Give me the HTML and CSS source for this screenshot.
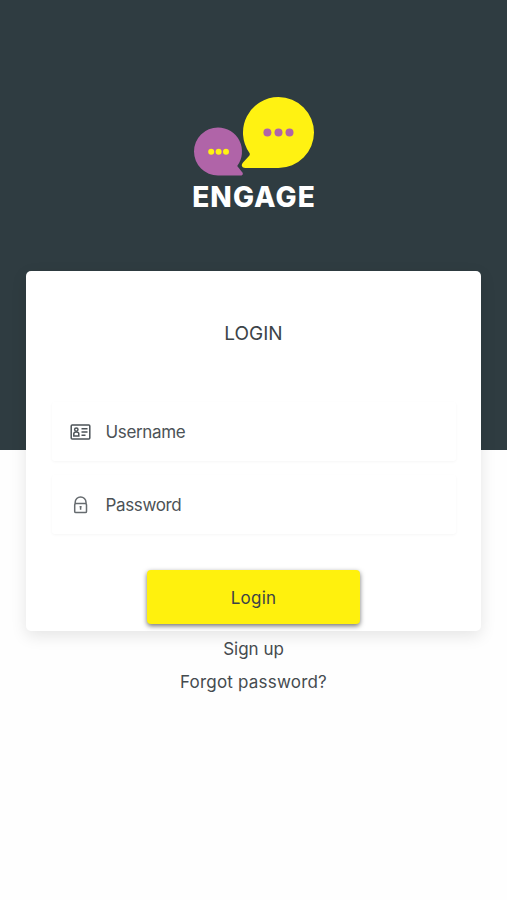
FILE: index.html
```
<!DOCTYPE html>
<html lang="en">
<head>
    <meta charset="UTF-8">
    <meta name="viewport" content="width=device-width, initial-scale=1.0">
    <title>Engage - Login</title>
    <link rel="stylesheet" href="styles.css">
</head>
<body>
    <header class="hero">
        <svg class="logo" width="124" height="82" viewBox="192 96 124 82">
            <path fill="#b064a8" d="M218 127.500A24 24 0 1 0 218 175.500H240.500C243 175.500 243.500 173.500 242 172L237.200 165.900A24 24 0 0 0 218 127.500Z"/>
            <path fill="#fff212" d="M278.500 97A35.500 35.500 0 0 0 249.500 153Q250.300 154.500 249 156L243 162.500C240.500 165.500 242 168 245.500 168H278.500A35.500 35.500 0 0 0 278.500 97Z"/>
            <g fill="#fff212">
                <circle cx="211.200" cy="151.700" r="3"/>
                <circle cx="218.600" cy="151.700" r="3"/>
                <circle cx="226" cy="151.700" r="3"/>
            </g>
            <g fill="#b064a8">
                <circle cx="267.400" cy="132.400" r="4"/>
                <circle cx="278.500" cy="132.400" r="4"/>
                <circle cx="289.500" cy="132.400" r="4"/>
            </g>
        </svg>
        <div class="brand">ENGAGE</div>
    </header>

    <form class="card">
        <h1>LOGIN</h1>

        <label class="field">
            <svg width="22" height="22" viewBox="0 0 22 22" fill="none" stroke="#4c5358" stroke-width="1.500">
                <rect x="1.200" y="4" width="18.600" height="14" rx="1"/>
                <circle cx="6.300" cy="8.600" r="1.700"/>
                <path d="M3.800 15v-2.200c0-1.200.9-1.900 2.500-1.900s2.500.7 2.500 1.900V15zM11.500 7.800h6M11.500 11h6M11.500 14.200h4"/>
            </svg>
            <input type="text" placeholder="Username">
        </label>

        <label class="field">
            <svg width="22" height="22" viewBox="0 0 22 22" fill="none" stroke="#666b6f" stroke-width="1.500">
                <rect x="4.700" y="9.600" width="11.800" height="9" rx="1.200"/>
                <path d="M5.200 9.600V8.300a5.400 5.400 0 0 1 10.800 0v1.300M10.600 12v3.800M9.600 12.700h2"/>
            </svg>
            <input type="password" placeholder="Password">
        </label>

        <button type="button">Login</button>
    </form>

    <nav class="links">
        <a href="#">Sign up</a>
        <a href="#" class="forgot">Forgot password?</a>
    </nav>
</body>
</html>
```

FILE: styles.css
```
* {
    box-sizing: border-box;
}
body {
    margin: 0;
    font-family: 'Inter', 'Liberation Sans', sans-serif;
    background-color: #fefefe;
    color: #3c4347;
}
.hero {
    height: 450px;
    padding-top: 96px;
    background-color: #2f3c41;
    display: flex;
    flex-direction: column;
    align-items: center;
}
.logo {
    display: block;
}
.brand {
    margin-top: 2px;
    padding-left: 1px;
    font-size: 28px;
    line-height: 34px;
    font-weight: 800;
    letter-spacing: 1.1px;
    color: #fff;
}
.card {
    width: 455px;
    height: 360px;
    margin: -179px auto 0;
    padding: 51px 25px 0;
    display: flex;
    flex-direction: column;
    align-items: center;
    background-color: #fff;
    border-radius: 5px;
    box-shadow: 0 5px 16px rgba(0, 0, 0, 0.1);
}
h1 {
    margin: 0 0 56px;
    font-size: 19px;
    line-height: 24px;
    font-weight: 400;
}
.field {
    width: 404px;
    height: 59px;
    margin-bottom: 14px;
    padding-left: 18px;
    display: flex;
    align-items: center;
    gap: 14px;
    border-radius: 3px;
    box-shadow: 0 1px 3px rgba(0, 0, 0, 0.04);
}
.field input {
    width: 300px;
    padding: 0;
    border: none;
    outline: none;
    background: none;
    font: 400 17px 'Inter', sans-serif;
    letter-spacing: -0.35px;
}
.field input::placeholder {
    color: #4c5256;
    opacity: 1;
}
button {
    width: 213px;
    height: 54px;
    margin-top: 22px;
    padding: 2px 0 0;
    flex-shrink: 0;
    border: none;
    border-radius: 4px;
    background-color: #fff10d;
    color: #3c4347;
    font: 400 17px 'Inter', sans-serif;
    letter-spacing: 0.2px;
    box-shadow: 0 2px 5px rgba(0, 0, 0, 0.55);
}
.links {
    padding-top: 6px;
    display: flex;
    flex-direction: column;
    align-items: center;
    gap: 9px;
}
.links a {
    color: #454b4f;
    font-size: 17px;
    line-height: 24px;
    text-decoration: none;
}
.links .forgot {
    letter-spacing: 0.2px;
}
```
